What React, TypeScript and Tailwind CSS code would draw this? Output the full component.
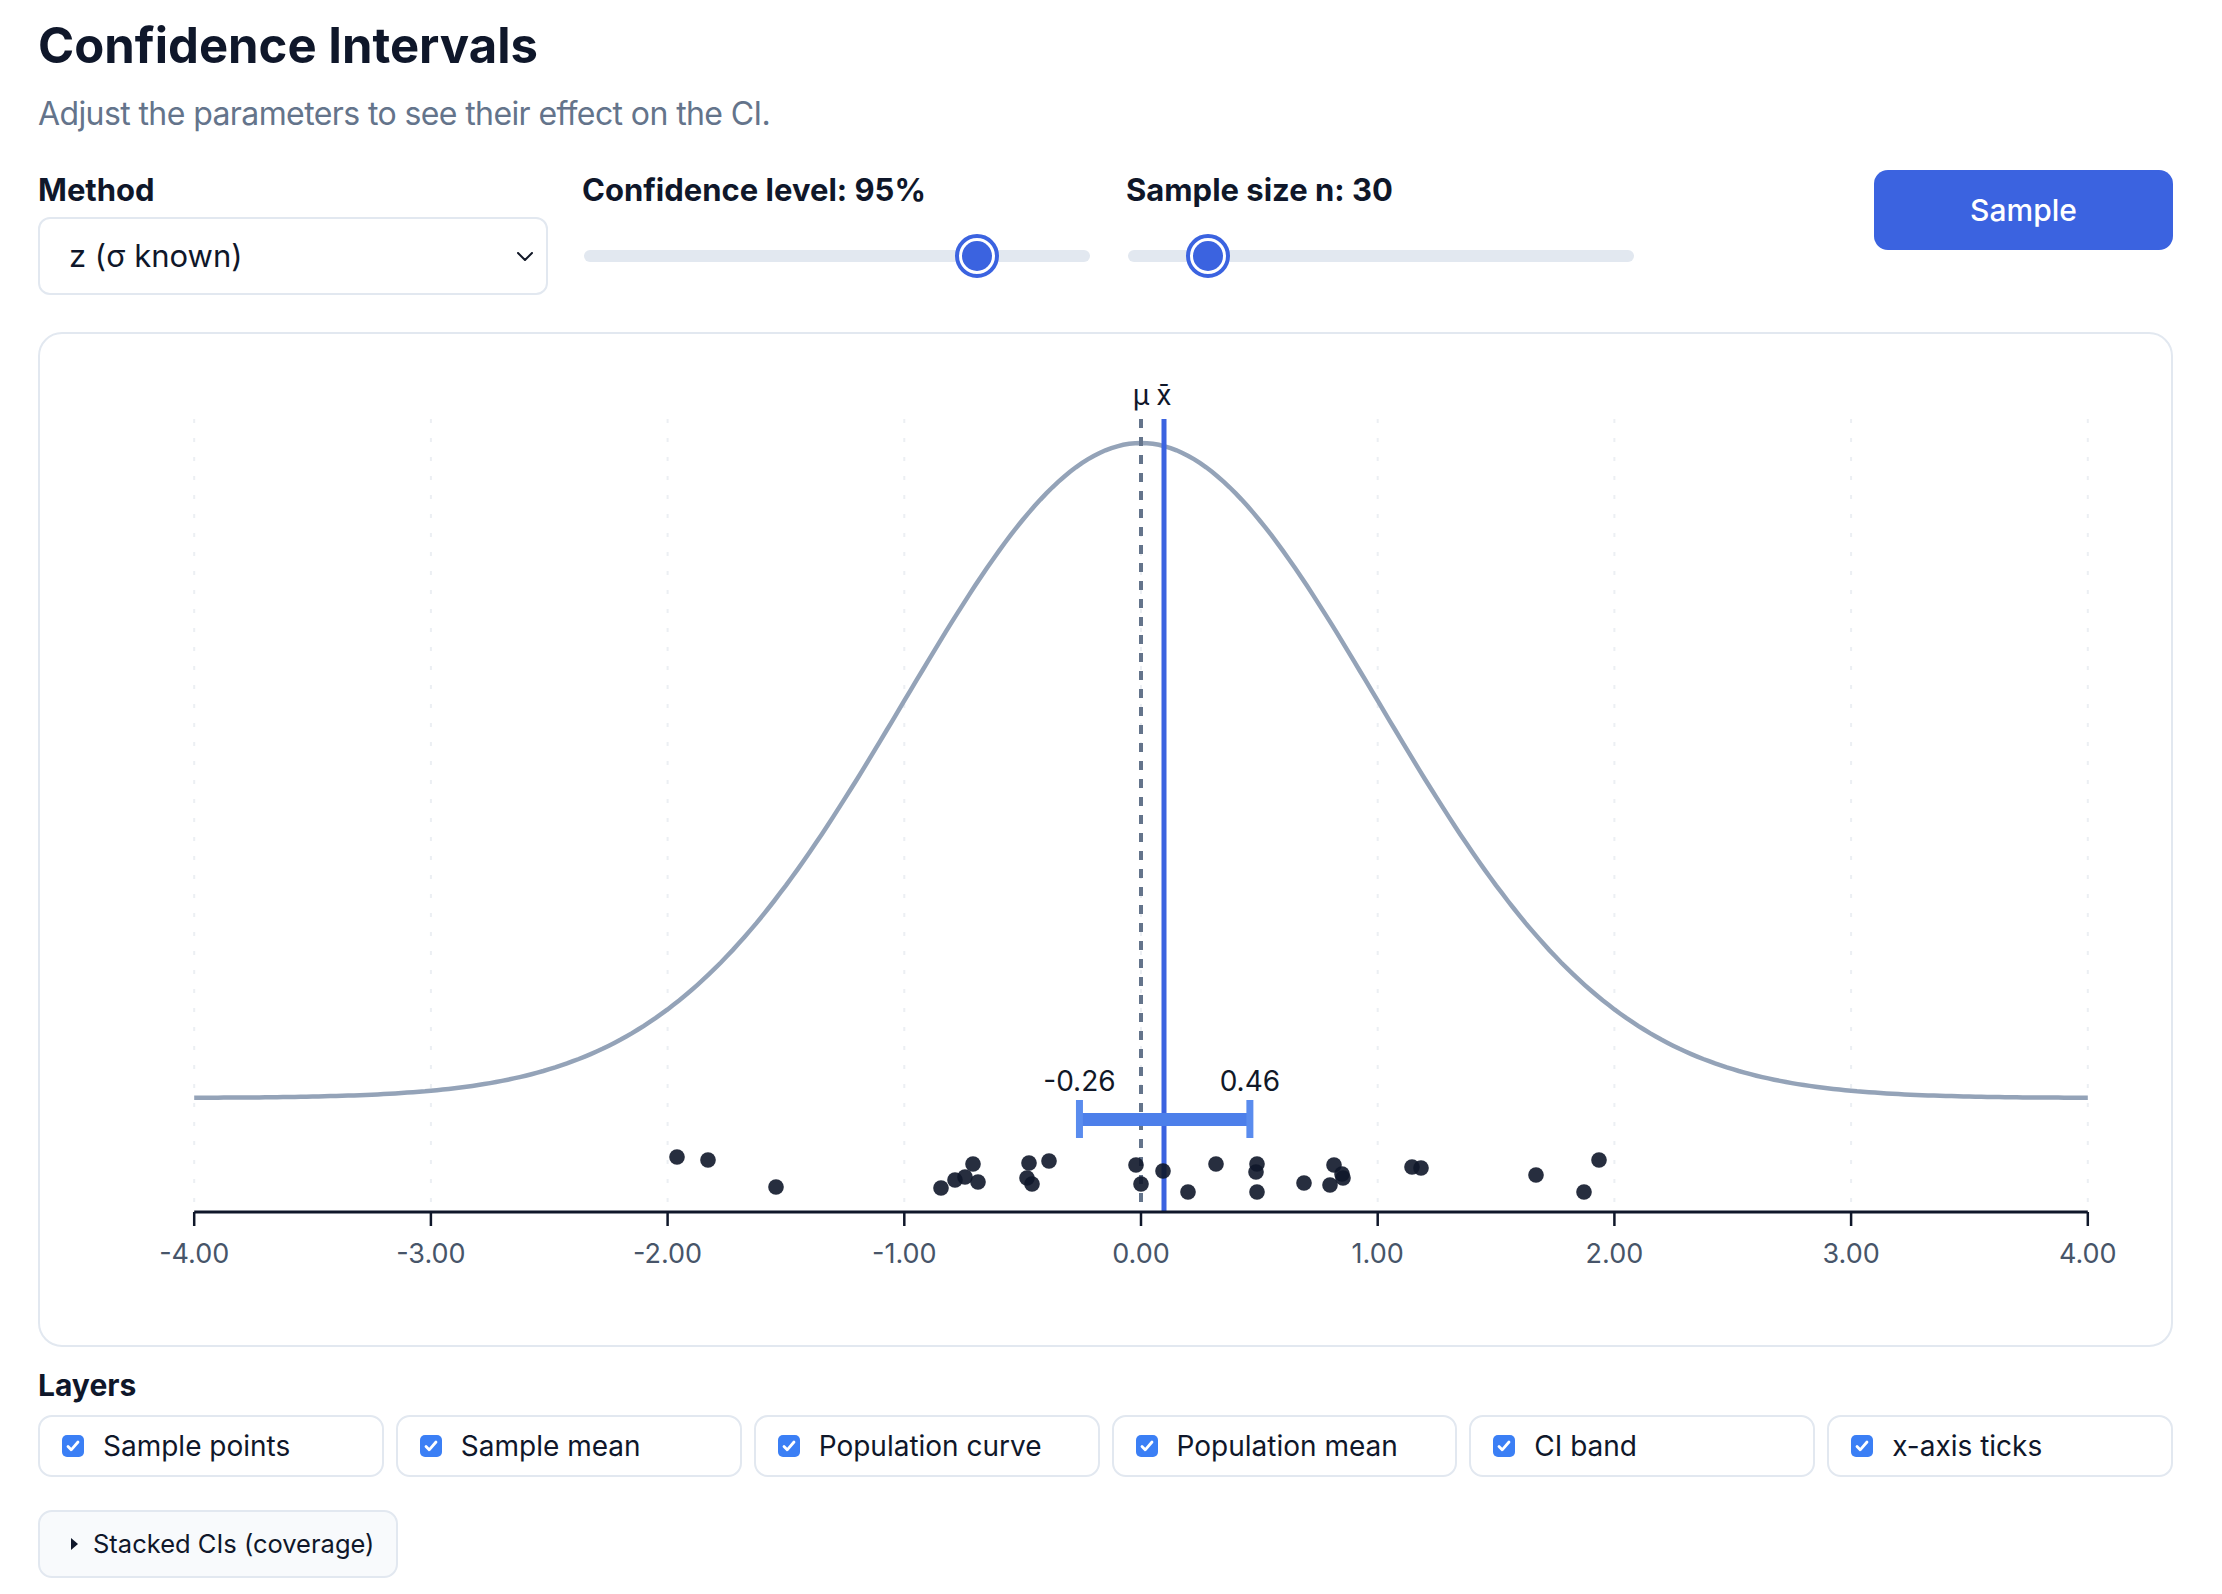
import React from 'react';

const X0 = 1141;
const UNIT = 236.7;
const BASE_Y = 1097;
const PEAK_H = 655;
const AXIS_Y = 1211;
const TOP_Y = 418;

const points: [number, number][] = [
  [677, 1156], [708, 1159], [776, 1186], [941, 1187], [955, 1179], [965, 1176],
  [973, 1163], [978, 1181], [1029, 1162], [1027, 1177], [1032, 1183], [1049, 1160],
  [1136, 1164], [1141, 1183], [1163, 1170], [1188, 1191], [1216, 1163], [1257, 1163],
  [1256, 1171], [1257, 1191], [1304, 1182], [1330, 1184], [1334, 1164], [1342, 1173],
  [1343, 1177], [1412, 1166], [1421, 1167], [1536, 1174], [1584, 1191], [1599, 1159],
];

const layers = ['Sample points', 'Sample mean', 'Population curve', 'Population mean', 'CI band', 'x-axis ticks'];

function curvePath() {
  const parts: string[] = [];
  for (let i = 0; i <= 320; i++) {
    const x = -4 + i * 0.025;
    const px = X0 + UNIT * x;
    const py = BASE_Y - PEAK_H * Math.exp(-(x * x) / 2);
    parts.push(`${i === 0 ? 'M' : 'L'}${px.toFixed(1)},${py.toFixed(1)}`);
  }
  return parts.join(' ');
}

function Slider({ frac }: { frac: number }) {
  return (
    <div className="relative h-[78px] mx-[2px] flex items-center">
      <div className="w-full h-[12px] rounded-full bg-[#e2e8f0]" />
      <div
        className="absolute top-1/2 -translate-x-1/2 -translate-y-1/2 w-[44px] h-[44px] rounded-full border-[4px] border-[#3b63e0] bg-white p-[3px]"
        style={{ left: `${frac * 100}%` }}
      >
        <div className="w-full h-full rounded-full bg-[#3b63e0]" />
      </div>
    </div>
  );
}

function Chart() {
  const ticks = [-4, -3, -2, -1, 0, 1, 2, 3, 4];
  const xbar = 1164;
  const lo = X0 + UNIT * -0.26;
  const hi = X0 + UNIT * 0.46;
  return (
    <svg width="2131" height="1011" viewBox="40 333 2131 1011" className="block">
      {ticks.map(t => (
        <line key={`g${t}`} x1={X0 + UNIT * t} x2={X0 + UNIT * t} y1={TOP_Y} y2={AXIS_Y} stroke="#eceff3" strokeWidth="2" strokeDasharray="4 15" />
      ))}
      <path d={curvePath()} fill="none" stroke="#94a3b8" strokeWidth="4.5" />
      <line x1={X0} x2={X0} y1={TOP_Y} y2={AXIS_Y} stroke="#64748b" strokeWidth="4" strokeDasharray="9 9" />
      <line x1={xbar} x2={xbar} y1={TOP_Y} y2={AXIS_Y} stroke="#3b63e0" strokeWidth="5" />
      <text x={X0} y={404} textAnchor="middle" fontSize="28" fill="#0f172a">μ</text>
      <text x={xbar} y={404} textAnchor="middle" fontSize="28" fill="#0f172a">x̄</text>
      <line x1={lo} x2={hi} y1={1118.5} y2={1118.5} stroke="#4d7fea" strokeWidth="13" />
      <line x1={lo} x2={lo} y1={1099} y2={1137} stroke="#5a8cee" strokeWidth="7" />
      <line x1={hi} x2={hi} y1={1099} y2={1137} stroke="#5a8cee" strokeWidth="7" />
      <text x={lo} y={1090} textAnchor="middle" fontSize="28" fill="#111827">-0.26</text>
      <text x={hi} y={1090} textAnchor="middle" fontSize="28" fill="#111827">0.46</text>
      {points.map(([x, y], i) => (
        <circle key={i} cx={x} cy={y} r="7.8" fill="#0f172a" fillOpacity="0.9" />
      ))}
      <line x1={X0 - 4 * UNIT} x2={X0 + 4 * UNIT} y1={AXIS_Y} y2={AXIS_Y} stroke="#0f172a" strokeWidth="3" />
      {ticks.map(t => (
        <g key={`t${t}`}>
          <line x1={X0 + UNIT * t} x2={X0 + UNIT * t} y1={AXIS_Y} y2={1225} stroke="#0f172a" strokeWidth="2.5" />
          <text x={X0 + UNIT * t} y={1262} textAnchor="middle" fontSize="27" fill="#475569">{t.toFixed(2)}</text>
        </g>
      ))}
    </svg>
  );
}

export default function App() {
  return (
    <div className="w-[2211px] min-h-screen bg-white px-[38px] pt-[18px] text-[#0f172a]" style={{ fontFamily: 'Inter, "Noto Sans", sans-serif' }}>
      <h1 className="text-[49px] leading-[56px] font-bold">Confidence Intervals</h1>
      <p className="mt-[16px] text-[32px] leading-[48px] text-[#64748b] tracking-[-0.6px]">Adjust the parameters to see their effect on the CI.</p>

      <div className="mt-[32px] grid grid-cols-[510px_510px_510px_1fr] gap-[34px]">
        <div className="flex flex-col gap-[7px]">
          <label className="text-[31px] leading-[40px] font-bold">Method</label>
          <div className="h-[78px] rounded-[12px] border-2 border-[#e2e8f0] flex items-center justify-between pl-[29px] pr-[13px]">
            <span className="text-[31px]">z (σ known)</span>
            <svg width="16" height="9" viewBox="0 0 16 9" fill="none">
              <path d="M1 1l7 7 7-7" stroke="#111827" strokeWidth="2" strokeLinecap="round" strokeLinejoin="round" />
            </svg>
          </div>
        </div>
        <div className="flex flex-col gap-[7px]">
          <label className="text-[31px] leading-[40px] font-bold">Confidence level: 95%</label>
          <Slider frac={0.776} />
        </div>
        <div className="flex flex-col gap-[7px]">
          <label className="text-[31px] leading-[40px] font-bold">Sample size n: 30</label>
          <Slider frac={0.158} />
        </div>
        <div className="flex justify-end items-start">
          <button className="w-[299px] h-[80px] rounded-[14px] bg-[#3b63e0] text-white text-[30px] font-medium">Sample</button>
        </div>
      </div>

      <div className="mt-[37px] rounded-[24px] border-2 border-[#e2e8f0] overflow-hidden">
        <Chart />
      </div>

      <div className="mt-[18px] text-[30px] leading-[40px] font-bold">Layers</div>
      <div className="mt-[10px] grid grid-cols-6 gap-[12px]">
        {layers.map(l => (
          <div key={l} className="h-[62px] rounded-[14px] border-2 border-[#e2e8f0] flex items-center px-[22px] gap-[19px]">
            <span className="w-[22px] h-[22px] rounded-[5px] bg-[#3b7ff5] flex items-center justify-center shrink-0">
              <svg width="14" height="12" viewBox="0 0 14 12" fill="none">
                <path d="M2 6.5l3.2 3.3L12 2" stroke="white" strokeWidth="2.8" strokeLinecap="round" strokeLinejoin="round" />
              </svg>
            </span>
            <span className="text-[28px] leading-none">{l}</span>
          </div>
        ))}
      </div>

      <div className="mt-[33px] inline-flex h-[68px] items-center gap-[14px] rounded-[14px] border-2 border-[#e2e8f0] bg-[#f8fafc] pl-[30px] pr-[22px]">
        <svg width="9" height="14" viewBox="0 0 9 14">
          <path d="M1 1l7 6-7 6z" fill="#0f172a" />
        </svg>
        <span className="text-[25.5px]">Stacked CIs (coverage)</span>
      </div>
    </div>
  );
}
